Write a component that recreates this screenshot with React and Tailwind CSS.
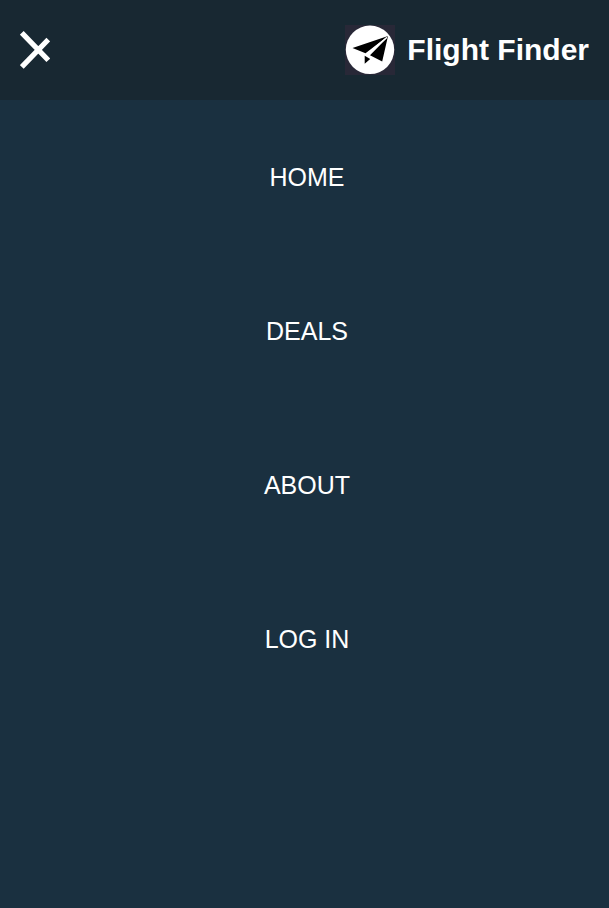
const links = ["HOME", "DEALS", "ABOUT", "LOG IN"];

function CloseIcon() {
  return (
    <svg width="30" height="40" viewBox="0 0 30 40" aria-hidden="true">
      <path d="M1.8 2.8 28.3 30.3M28.3 9.5 1.8 37" stroke="#fff" strokeWidth="5.2" fill="none" />
    </svg>
  );
}

function Logo() {
  return (
    <svg width="50" height="50" viewBox="0 0 50 50" aria-hidden="true">
      <rect width="50" height="50" fill="#282837" />
      <circle cx="25" cy="24.8" r="24.2" fill="#fff" />
      <path d="M7.5 23 43 11 20.5 28.3zM43 11 37.2 36.6 25 30.3 41 14zM19.7 30.7 25.2 34 19.7 38.8z" fill="#000" />
      <path d="M41.8 12.5 23 28.3" stroke="#fff" strokeWidth="1.3" />
    </svg>
  );
}

export default function App() {
  return (
    <div className="flex h-[908px] w-full flex-col bg-[#1a3040] font-['Liberation_Sans',Arial,sans-serif] text-white">
      <header className="flex h-[100px] items-center justify-between bg-[#182832] px-5">
        <button aria-label="Close menu"><CloseIcon /></button>
        <div className="flex items-center gap-3">
          <Logo />
          <h1 className="text-[30px] leading-none font-bold whitespace-nowrap">Flight Finder</h1>
        </div>
      </header>
      <nav className="flex flex-col items-center pt-px pl-[5px]">
        {links.map((link) => (
          <a key={link} className="flex h-[154px] items-center text-[25px]">{link}</a>
        ))}
      </nav>
    </div>
  );
}
